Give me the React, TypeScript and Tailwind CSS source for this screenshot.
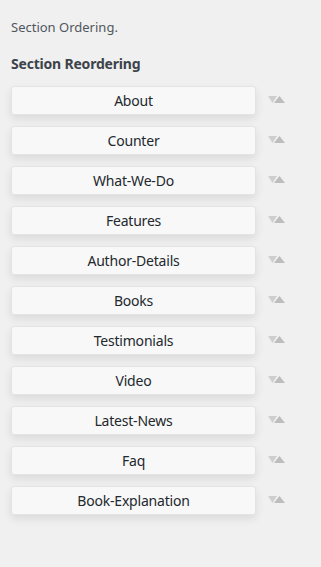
const sections = [
  "About",
  "Counter",
  "What-We-Do",
  "Features",
  "Author-Details",
  "Books",
  "Testimonials",
  "Video",
  "Latest-News",
  "Faq",
  "Book-Explanation",
]

function SortArrows() {
  return (
    <svg width="18" height="8" viewBox="0 0 18 8" className="shrink-0">
      <polygon points="0,0 9,0 4.5,7" fill="#cfcfcf" />
      <polygon points="11.5,0 17,7 6,7" fill="#bdbdbd" />
    </svg>
  )
}

export default function App() {
  return (
    <div
      className="min-h-screen bg-[#f0f0f0] pl-[11px] pt-[17px]"
      style={{ fontFamily: '"Noto Sans", "Open Sans", sans-serif' }}
    >
      <p className="text-[13px] leading-[20px] text-[#50575e]">Section Ordering.</p>
      <h3 className="mt-[17px] text-[14px] font-bold leading-[20px] tracking-[-0.2px] text-[#3c434a]">
        Section Reordering
      </h3>
      <ul className="mt-[12px] flex flex-col gap-[11px]">
        {sections.map((name) => (
          <li key={name} className="flex items-center">
            <div className="flex h-[29px] w-[245px] items-center justify-center rounded-[3px] border border-[#e4e4e4] bg-[#f8f8f8] text-[14px] tracking-[-0.2px] text-[#23282d] shadow-[0_4px_8px_rgba(0,0,0,0.09)]">
              {name}
            </div>
            <div className="ml-[12px] -mt-[2px]">
              <SortArrows />
            </div>
          </li>
        ))}
      </ul>
    </div>
  )
}
